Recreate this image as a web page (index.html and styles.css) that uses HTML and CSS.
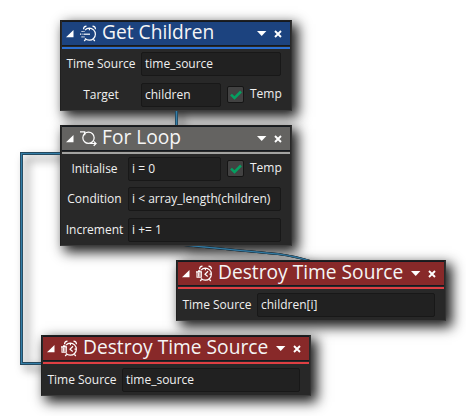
FILE: index.html
```html
<!DOCTYPE html>
<html lang="en">
<head>
<meta charset="utf-8">
<title>Visual script</title>
<link rel="stylesheet" href="styles.css">
</head>
<body>
<svg class="defs" width="0" height="0" aria-hidden="true">
  <symbol id="fold" viewBox="0 0 8 8"><path d="M7.5 0V7.3H0z" fill="#fff"/></symbol>
  <symbol id="down" viewBox="0 0 10 5"><path d="M0 0H9.4L4.7 4.9z" fill="#fff"/></symbol>
  <symbol id="close" viewBox="0 0 8 8"><path d="M1 1L7 7M7 1L1 7" stroke="#fff" stroke-width="1.9" fill="none"/></symbol>
  <symbol id="tick" viewBox="0 0 12 10"><path d="M1 4.6L4.5 8L11 1.5" stroke="#049f60" stroke-width="2.5" fill="none"/></symbol>
  <symbol id="children" viewBox="0 0 17 17"><g fill="none" stroke="#fff" stroke-width="1.2"><path d="M5 5.1A6 6 0 1 1 5 13.3M3.500 4.200Q3.500 1.500 6.500 1.200M12.500 1.200Q15.500 1.500 15.500 4.200M9.400 3.500V5.200M5.500 14.500L4.200 16M13.500 14.500L14.800 16"/><path d="M3.500 9.200H10"/><path d="M0 9.200H2.500M1.500 6.500H4.500M1.500 11.900H4.500" stroke-dasharray="1.2 .7"/></g></symbol>
  <symbol id="loop" viewBox="0 0 18 18"><g fill="none" stroke="#fff" stroke-width="1.3"><circle cx="9" cy="8.200" r="6"/><path d="M0 2H5V5.500M10.500 14.300H16.500M14.500 12L17 14.300L14.500 16.700"/></g></symbol>
  <symbol id="destroy" viewBox="0 0 17 17"><g fill="none" stroke="#fff" stroke-width="1.2"><path d="M5 5.1A6 6 0 1 1 5 13.300M3.500 4.200Q3.500 1.500 6.500 1.200M12.500 1.200Q15.500 1.500 15.500 4.200M9.400 3.500V5.200M5.500 14.500L4.200 16M13.500 14.500L14.800 16M13.500 9.200H15M12 6.300L9 9.200L11.700 11.500"/><path d="M0 6.900H6M2 5.700H4.500M1 7V12.200H5.300V7" stroke-width="1.1"/><path d="M2.500 7.500V11.800M3.900 7.500V11.800" stroke-width=".9"/></g></symbol>
</svg>

<main class="canvas">
  <svg class="links link-shadow" width="466" height="416">
    <path d="M176.500 106V130M64 153.500H21.500V363.500H46M184 245Q244 251 278 254Q296 256.500 310 261"/>
  </svg>
  <svg class="links link-lines" width="466" height="416">
    <g class="edge"><path d="M176.500 106V130M64 153.500H21.500V363.500H46"/><path class="curve" d="M184 245Q244 251 278 254Q296 256.500 310 261"/></g>
    <g class="core"><path d="M176.500 106V130M64 153.500H21.500V363.500H46M184 245Q244 251 278 254Q296 256.500 310 261"/></g>
  </svg>

  <section class="node narrow blue get-children">
    <header><svg class="fold"><use href="#fold"/></svg><svg class="icon"><use href="#children"/></svg><h2>Get Children</h2><svg class="down"><use href="#down"/></svg><svg class="close"><use href="#close"/></svg></header>
    <div class="fields wide-label">
      <div class="row"><label>Time Source</label><div class="input">time_source</div></div>
      <div class="row"><label>Target</label><div class="input short">children</div><span class="check"><svg><use href="#tick"/></svg></span><span class="temp">Temp</span></div>
    </div>
  </section>

  <section class="node narrow grey for-loop">
    <header><svg class="fold"><use href="#fold"/></svg><svg class="icon"><use href="#loop"/></svg><h2>For Loop</h2><svg class="down"><use href="#down"/></svg><svg class="close"><use href="#close"/></svg></header>
    <div class="fields">
      <div class="row"><label>Initialise</label><div class="input">i = 0</div><span class="check"><svg><use href="#tick"/></svg></span><span class="temp">Temp</span></div>
      <div class="row"><label>Condition</label><div class="input">i &lt; array_length(children)</div></div>
      <div class="row"><label>Increment</label><div class="input">i += 1</div></div>
    </div>
  </section>

  <section class="node red destroy-child">
    <header><svg class="fold"><use href="#fold"/></svg><svg class="icon"><use href="#destroy"/></svg><h2>Destroy Time Source</h2><svg class="down"><use href="#down"/></svg><svg class="close"><use href="#close"/></svg></header>
    <div class="fields wide-label">
      <div class="row"><label>Time Source</label><div class="input">children[i]</div></div>
    </div>
  </section>

  <section class="node red destroy-source">
    <header><svg class="fold"><use href="#fold"/></svg><svg class="icon"><use href="#destroy"/></svg><h2>Destroy Time Source</h2><svg class="down"><use href="#down"/></svg><svg class="close"><use href="#close"/></svg></header>
    <div class="fields wide-label">
      <div class="row"><label>Time Source</label><div class="input">time_source</div></div>
    </div>
  </section>
</main>
</body>
</html>
```
FILE: styles.css
```css
* { box-sizing: border-box; }
body { margin: 0; background: #fff; font-family: "Open Sans", "Noto Sans", sans-serif; color: #f0f0f0; }
.defs { position: absolute; }
.canvas { position: relative; width: 466px; height: 416px; overflow: hidden; }

.node { position: absolute; z-index: 2; width: 270px; background: #282828; border: 1px solid #202020; border-right-color: #333; border-bottom-color: #3c3c3c; box-shadow: 5px 5px 12px 1px rgba(0, 0, 0, .9); }
.narrow { width: 232px; }
.get-children { left: 60px; top: 20px; height: 91px; }
.for-loop { left: 60px; top: 125px; height: 121px; }
.destroy-child { left: 176px; top: 260px; height: 61px; }
.destroy-source { left: 41px; top: 335px; height: 61px; }

.links { position: absolute; left: 0; top: 0; fill: none; }
.link-shadow { z-index: 1; stroke: #000; stroke-width: 2; filter: drop-shadow(5px 5px 5px rgba(0, 0, 0, .8)); }
.link-lines { z-index: 3; clip-path: path(evenodd, "M0 0H466V416H0ZM60 20V111H292V20ZM60 125V246H292V125ZM176 260V321H446V260ZM41 335V396H311V335Z"); }
.edge { stroke: #25495e; stroke-width: 3; }
.edge .curve { stroke-width: 2; }
.core { stroke: #347ea8; stroke-width: 1.2; }

header { display: flex; align-items: center; height: 25px; margin: 0 1px 1px; padding: 0 8px 0 4px; border: solid #151a20; border-width: 1px 0; background: var(--head); }
.fields { border-top: 2px solid var(--accent); margin: 0 1px; padding-top: 3px; }
.blue { --head: #1c437f; --accent: #2b70d3; }
.grey { --head: #646361; --accent: #a3a3a1; }
.red { --head: #882929; --accent: #df3f43; }

h2 { flex: 1; margin: -5px 0 0 5px; font-size: 19.200px; font-weight: 400; line-height: 23px; white-space: nowrap; color: #f5f5f5; }
svg { display: block; flex: none; }
.fold { width: 8px; height: 8px; margin-top: 1px; }
.icon { width: 17px; height: 17px; margin-left: 6px; }
.down { width: 10px; height: 5px; margin-right: 7px; }
.close { width: 8px; height: 8px; }

.row { display: flex; height: 24px; margin-bottom: 7px; font-size: 12px; line-height: 23px; white-space: nowrap; }
.for-loop .row:first-child { margin-bottom: 6px; }
label { width: 66px; padding-right: 1px; text-align: center; }
.wide-label label { width: 79px; }
.red .fields { padding-top: 4px; }
.input { width: 153px; height: 24px; padding-left: 3px; border: 1px solid #181818; border-radius: 2px; background: #212121; line-height: 22px; }
.wide-label .input { width: 140px; }
.red .input { width: 178px; }
.wide-label .short { width: 80px; }
.for-loop .row:first-child .input { width: 93px; }
.check { display: flex; align-items: center; justify-content: center; width: 17px; height: 17px; margin: 3px 6px 0; border: 1px solid #151515; border-radius: 2px; background: #424242; }
.check svg { width: 12px; height: 10px; }
.temp { line-height: 21px; }
```
